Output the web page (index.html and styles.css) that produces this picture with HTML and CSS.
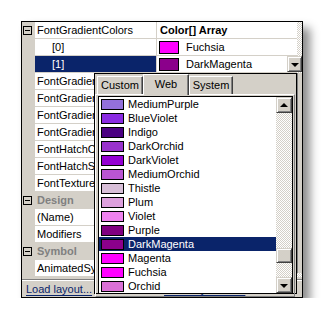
FILE: index.html
```html
<!DOCTYPE html>
<html lang="en">
<head>
    <meta charset="UTF-8">
    <title>Property grid</title>
    <link rel="stylesheet" href="styles.css">
</head>
<body>
    <div class="grid">
        <div class="body">
            <div class="rows">
                <div class="row">
                    <span class="gut"><i class="minus"></i></span>
                    <span class="name">FontGradientColors</span>
                    <span class="val"><b>Color[] Array</b></span>
                </div>
                <div class="row">
                    <span class="gut"></span>
                    <span class="name sub">[0]</span>
                    <span class="val"><i class="sw" style="background:#ff00ff"></i>Fuchsia</span>
                </div>
                <div class="row">
                    <span class="gut"></span>
                    <span class="name sub sel">[1]</span>
                    <span class="val"><i class="sw" style="background:#8b008b"></i>DarkMagenta</span>
                    <span class="btn drop"><i class="dn"></i></span>
                </div>
                <div class="row"><span class="gut"></span><span class="name">FontGradientEndColor</span><span class="val"></span></div>
                <div class="row"><span class="gut"></span><span class="name">FontGradientStyle</span><span class="val"></span></div>
                <div class="row"><span class="gut"></span><span class="name">FontGradientType</span><span class="val"></span></div>
                <div class="row"><span class="gut"></span><span class="name">FontGradientAngle</span><span class="val"></span></div>
                <div class="row"><span class="gut"></span><span class="name">FontHatchColor</span><span class="val"></span></div>
                <div class="row"><span class="gut"></span><span class="name">FontHatchStyle</span><span class="val"></span></div>
                <div class="row"><span class="gut"></span><span class="name">FontTexture</span><span class="val"></span></div>
                <div class="row cat">
                    <span class="gut"><i class="minus"></i></span>
                    <span class="name">Design</span>
                </div>
                <div class="row"><span class="gut"></span><span class="name">(Name)</span><span class="val"></span></div>
                <div class="row"><span class="gut"></span><span class="name">Modifiers</span><span class="val"></span></div>
                <div class="row cat">
                    <span class="gut"><i class="minus"></i></span>
                    <span class="name">Symbol</span>
                </div>
                <div class="row"><span class="gut"></span><span class="name">AnimatedSymbol</span><span class="val"></span></div>
            </div>
            <div class="gscroll"><div class="gthumb"></div></div>
        </div>
        <div class="split"></div>
        <div class="links">
            <a href="#">Load layout...</a>
            <a href="#" class="save">Save layout as...</a>
        </div>

        <div class="popup">
            <div class="tabs">
                <span class="tab t-custom">Custom</span>
                <span class="tab t-web on">Web</span>
                <span class="tab t-system">System</span>
            </div>
            <div class="panel">
                <div class="list">
                    <div class="items">
                        <div class="item"><i class="csw" style="background:#9370db"></i>MediumPurple</div>
                        <div class="item"><i class="csw" style="background:#8a2be2"></i>BlueViolet</div>
                        <div class="item"><i class="csw" style="background:#4b0082"></i>Indigo</div>
                        <div class="item"><i class="csw" style="background:#9932cc"></i>DarkOrchid</div>
                        <div class="item"><i class="csw" style="background:#9400d3"></i>DarkViolet</div>
                        <div class="item"><i class="csw" style="background:#ba55d3"></i>MediumOrchid</div>
                        <div class="item"><i class="csw" style="background:#d8bfd8"></i>Thistle</div>
                        <div class="item"><i class="csw" style="background:#dda0dd"></i>Plum</div>
                        <div class="item"><i class="csw" style="background:#ee82ee"></i>Violet</div>
                        <div class="item"><i class="csw" style="background:#800080"></i>Purple</div>
                        <div class="item sel"><i class="csw" style="background:#8b008b"></i>DarkMagenta</div>
                        <div class="item"><i class="csw" style="background:#ff00ff"></i>Magenta</div>
                        <div class="item"><i class="csw" style="background:#ff00ff"></i>Fuchsia</div>
                        <div class="item"><i class="csw" style="background:#da70d6"></i>Orchid</div>
                    </div>
                    <div class="sbar">
                        <span class="btn arrow"><i class="up"></i></span>
                        <div class="track"><span class="btn thumb"></span></div>
                        <span class="btn arrow"><i class="dn"></i></span>
                    </div>
                </div>
            </div>
        </div>
    </div>
</body>
</html>
```

FILE: styles.css
```css
* {
    box-sizing: border-box;
}
body {
    margin: 0;
    background: #fff;
    color: #000;
    font: 11px "Liberation Sans", Arial, sans-serif;
}
.grid {
    position: relative;
    width: 282px;
    height: 277px;
    margin: 21px 0 0 21px;
    border: 1px solid #000;
    background: #d4d0c8;
    box-shadow: 7px 7px 9px rgba(0, 0, 0, 0.45);
    display: flex;
    flex-direction: column;
}
.body {
    display: flex;
    height: 255px;
}
.rows {
    width: 275px;
}
.row {
    position: relative;
    display: flex;
    height: 17px;
    border-bottom: 1px solid #d4d0c8;
    line-height: 16px;
}
.gut {
    width: 13px;
    flex: none;
    display: flex;
    align-items: center;
    padding-left: 1px;
}
.minus {
    position: relative;
    width: 9px;
    height: 9px;
    border: 1px solid #000;
}
.minus::after {
    content: "";
    position: absolute;
    left: 1px;
    top: 3px;
    width: 5px;
    height: 1px;
    background: #000;
}
.name {
    width: 121px;
    flex: none;
    background: #fff;
    padding-left: 2px;
    white-space: nowrap;
    overflow: hidden;
}
.name.sub {
    padding-left: 17px;
}
.name.sel {
    background: #0a246a;
    color: #fff;
}
.val {
    width: 141px;
    flex: none;
    display: flex;
    align-items: center;
    border-left: 1px solid #d4d0c8;
    background: #fff;
    padding-left: 2px;
    white-space: nowrap;
    overflow: hidden;
}
.val b {
    padding-left: 1px;
}
.sw {
    width: 20px;
    height: 13px;
    flex: none;
    border: 1px solid #000;
    margin-right: 7px;
}
.row.cat .name {
    flex: 1;
    background: none;
    color: #808080;
    font-weight: bold;
}

/* classic 3d button */
.btn {
    display: flex;
    align-items: center;
    justify-content: center;
    background: #d4d0c8;
    border: 1px solid;
    border-color: #d4d0c8 #404040 #404040 #d4d0c8;
    box-shadow: inset 1px 1px #fff, inset -1px -1px #808080;
}
.dn, .up {
    width: 0;
    height: 0;
    border-left: 4px solid transparent;
    border-right: 4px solid transparent;
}
.dn {
    border-top: 4px solid #000;
    margin-top: 1px;
}
.up {
    border-bottom: 4px solid #000;
    margin-top: -1px;
}
.drop {
    position: absolute;
    top: 0;
    right: -5px;
    width: 15px;
    height: 16px;
}

.gscroll {
    width: 5px;
    background: repeating-conic-gradient(#d4d0c8 0 25%, #fff 0 50%) 0 0 / 2px 2px;
}
.gthumb {
    margin-top: 51px;
    height: 200px;
    background: #d4d0c8;
    border-left: 1px solid #808080;
}
.split {
    height: 4px;
    border-bottom: 1px solid #fff;
    box-shadow: inset 0 -1px #808080;
}
.links {
    height: 16px;
    display: flex;
    align-items: center;
    padding-left: 4px;
}
.links a {
    color: #0a246a;
    text-decoration: underline;
    text-underline-offset: 2px;
}
.links .save {
    margin-left: 72px;
}

/* color picker popup */
.popup {
    position: absolute;
    left: 72px;
    top: 51px;
    width: 203px;
    height: 221px;
    border: 1px solid #000;
    background: #d4d0c8;
    padding: 0 1px 1px 0;
    display: flex;
    flex-direction: column;
}
.tabs {
    height: 20px;
    display: flex;
    align-items: flex-end;
    padding-left: 2px;
    position: relative;
    z-index: 1;
}
.tab {
    height: 18px;
    text-align: center;
    line-height: 17px;
    background: #d4d0c8;
    border: 1px solid;
    border-bottom: none;
    border-color: #fff #404040 #404040 #fff;
    box-shadow: inset -1px 0 #808080;
}
.t-custom {
    width: 46px;
}
.t-web {
    width: 46px;
}
.t-system {
    width: 44px;
}
.tab.on {
    height: 21px;
    margin-bottom: -1px;
    line-height: 19px;
}
.panel {
    flex: 1;
    border: 1px solid;
    border-color: #fff #808080 #808080 #fff;
    padding: 1px 1px 2px 2px;
}
.list {
    height: 100%;
    display: flex;
    border: 1px solid #000;
    background: #fff;
}
.items {
    flex: 1;
    overflow: hidden;
}
.item {
    height: 14px;
    display: flex;
    align-items: center;
    padding-left: 2px;
    white-space: nowrap;
}
.item.sel {
    background: #0a246a;
    color: #fff;
}
.csw {
    width: 23px;
    height: 11px;
    flex: none;
    border: 1px solid #000;
    margin-right: 4px;
}
.sbar {
    width: 16px;
    display: flex;
    flex-direction: column;
}
.arrow {
    height: 16px;
    flex: none;
}
.track {
    flex: 1;
    background: repeating-conic-gradient(#d4d0c8 0 25%, #fff 0 50%) 0 0 / 2px 2px;
}
.thumb {
    margin-top: 135px;
    height: 15px;
}
```
